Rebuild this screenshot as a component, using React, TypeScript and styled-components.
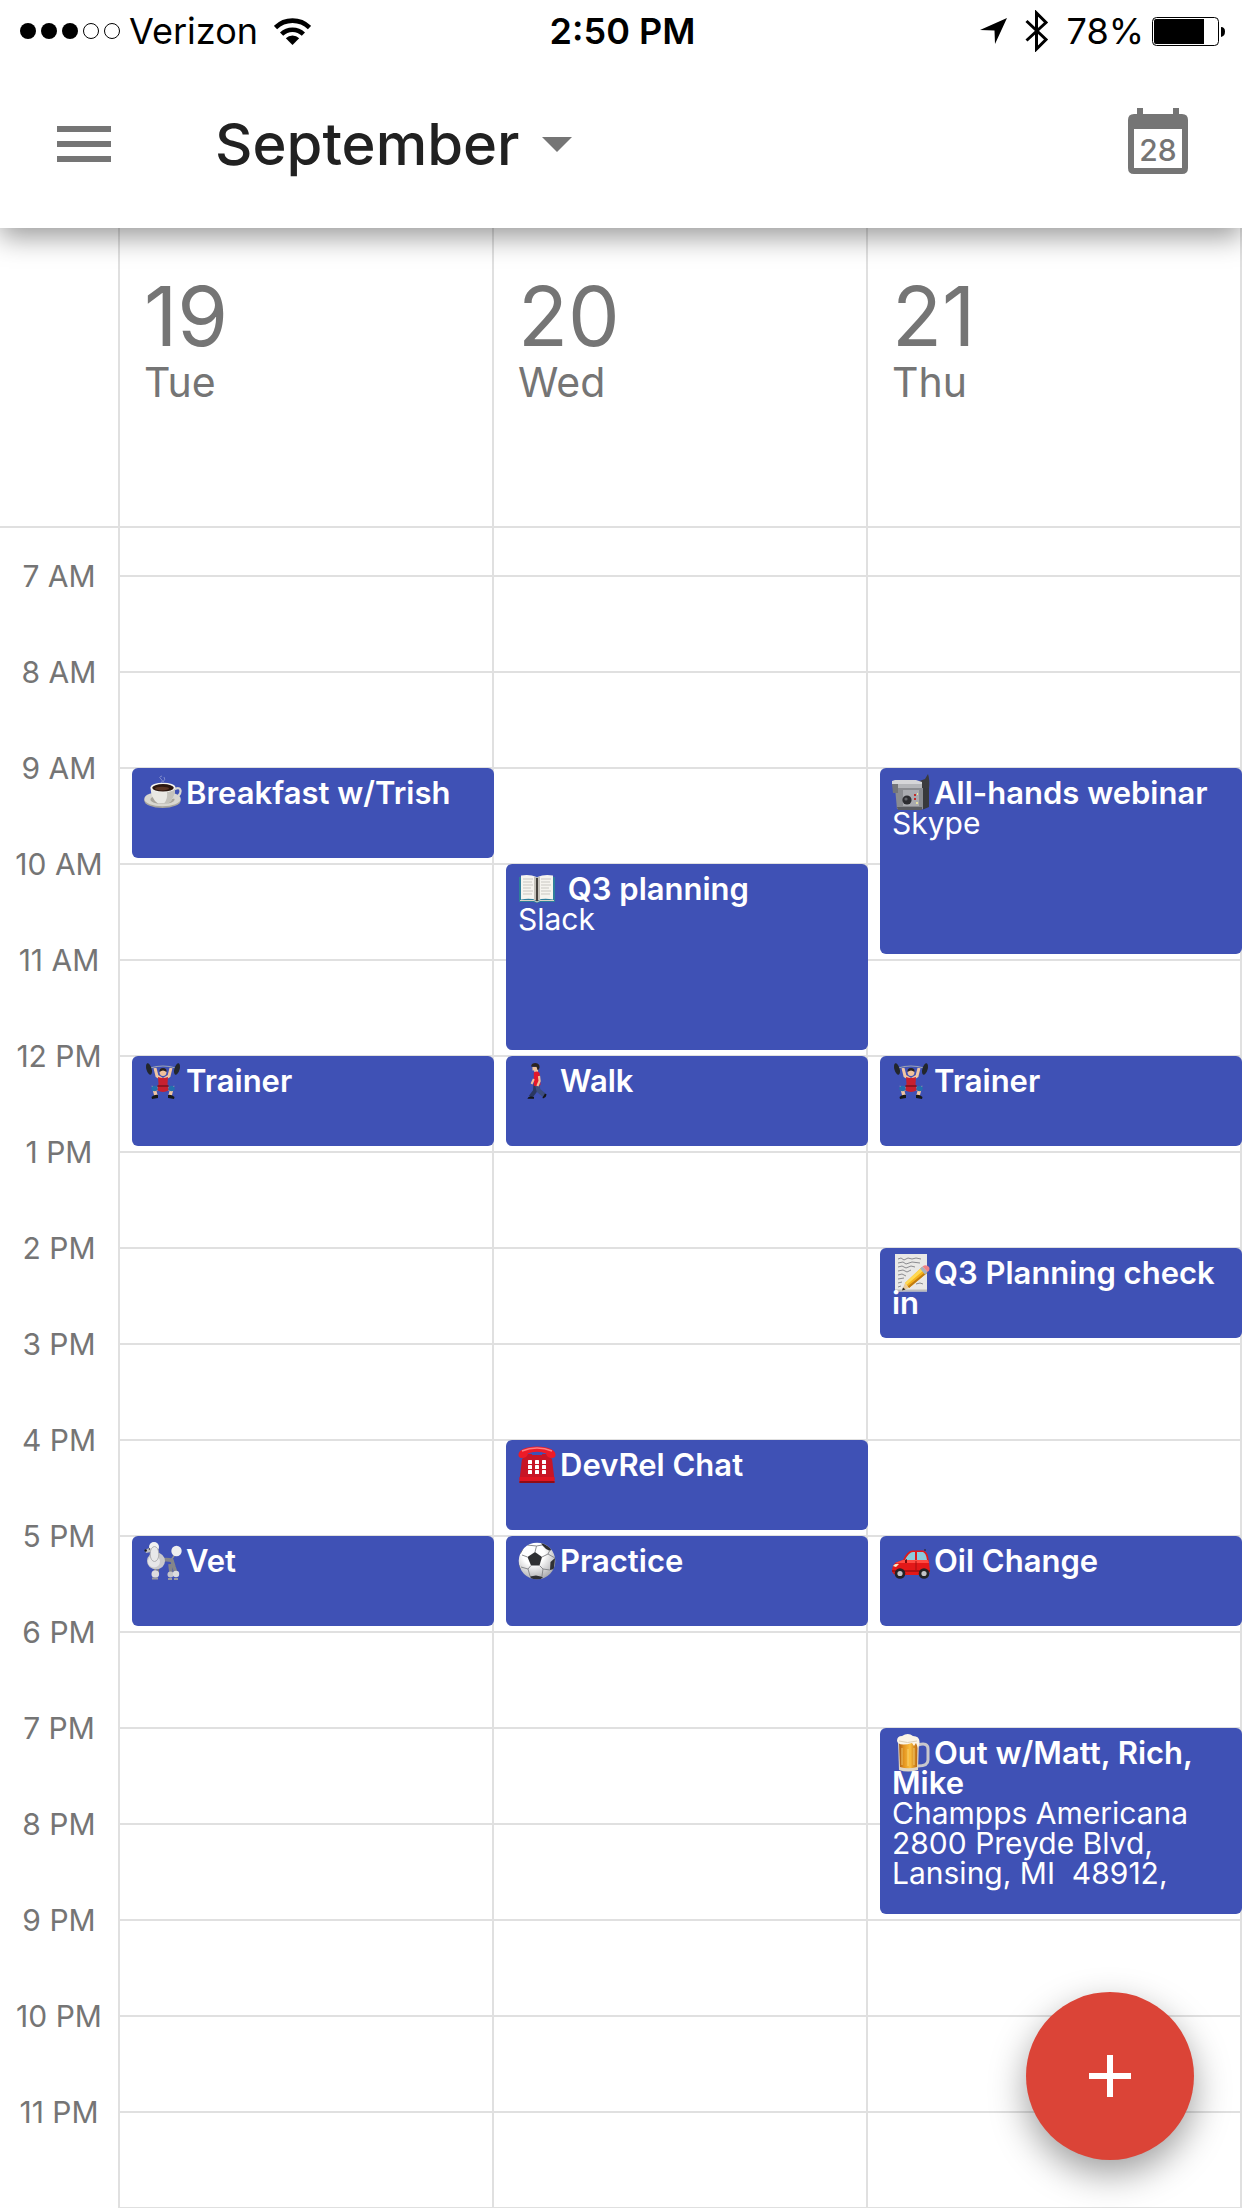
import React from "react";
import styled, { createGlobalStyle } from "styled-components";

const HOUR = 96;
const LINE = "#e0e0e0";
const GREY = "#757575";

const GlobalStyle = createGlobalStyle`
  * { box-sizing: border-box; }
  body {
    margin: 0;
    background: #fff;
    font-family: Inter, "Liberation Sans", sans-serif;
  }
  button {
    padding: 0;
    border: 0;
    background: none;
    font: inherit;
    color: inherit;
    cursor: pointer;
  }
  svg { display: block; flex: none; }
`;

const Screen = styled.div`
  position: relative;
  display: flex;
  flex-direction: column;
  height: 100vh;
  overflow: hidden;
`;

const AppBar = styled.header`
  position: relative;
  z-index: 1;
  background: #fff;
  box-shadow: 0 9px 26px rgba(0, 0, 0, 0.4);
`;

const StatusBar = styled.div`
  display: grid;
  grid-template-columns: 1fr auto 1fr;
  align-items: center;
  height: 60px;
  padding: 2px 17px 0 20px;
  font-size: 36px;
  line-height: 42px;
  color: #000;
`;

const StatusGroup = styled.div<{ $end?: boolean }>`
  display: flex;
  align-items: center;
  justify-content: ${(p) => (p.$end ? "flex-end" : "flex-start")};
  gap: ${(p) => (p.$end ? "18px" : "8px")};
`;

const Carrier = styled.span`
  margin-right: 8px;
`;

const Charge = styled.span`
  display: flex;
  align-items: center;
  gap: 8px;
`;

const Clock = styled.time`
  font-weight: 600;
`;

const Toolbar = styled.div`
  display: flex;
  align-items: center;
  height: 168px;
  padding: 0 54px 0 57px;
`;

const MonthButton = styled.button`
  display: flex;
  align-items: center;
  gap: 22px;
  margin: 0 auto 0 104px;
  font-size: 58px;
  font-weight: 500;
  line-height: 72px;
  color: #212121;
`;

const TodayButton = styled.button`
  padding-bottom: 6px;
`;

const DayHeads = styled.div`
  display: grid;
  grid-template-columns: 120px repeat(3, 1fr);
  flex: none;
  height: 300px;
  border-bottom: 2px solid ${LINE};
  color: ${GREY};
`;

const Corner = styled.div`
  border-right: 2px solid ${LINE};
`;

const DayHead = styled.div`
  display: flex;
  flex-direction: column;
  padding: 46px 24px 0;
  border-right: 2px solid ${LINE};
`;

const DayNumber = styled.span`
  font-size: 82px;
  line-height: 86px;
`;

const DayName = styled.span`
  font-size: 41px;
  line-height: 44px;
`;

const Schedule = styled.main`
  display: grid;
  grid-template-columns: 120px repeat(3, 1fr);
  flex: 1;
  min-height: 0;
  overflow: hidden;
`;

const Gutter = styled.div`
  border-right: 2px solid ${LINE};
`;

const HourLabel = styled.div`
  display: flex;
  align-items: center;
  justify-content: center;
  height: ${HOUR}px;
  font-size: 30px;
  line-height: 32px;
  color: ${GREY};
`;

const DayColumn = styled.div`
  display: grid;
  grid-template-columns: 1fr 2px;
  grid-template-rows: 47px repeat(18, ${HOUR}px);
`;

const ColumnEdge = styled.div`
  grid-area: 1 / 2 / -1 / 3;
  background: ${LINE};
`;

const Slot = styled.div<{ $row: number }>`
  grid-column: 1;
  grid-row: ${(p) => p.$row};
  border-top: 2px solid ${LINE};
`;

const EventCard = styled.button<{ $row: number; $span: number }>`
  z-index: 0;
  grid-column: 1 / 3;
  grid-row: ${(p) => p.$row} / span ${(p) => p.$span};
  display: flex;
  flex-direction: column;
  margin: 1px 0 5px 12px;
  padding: 10px 12px 0;
  border-radius: 6px;
  background: #3f51b5;
  color: #fff;
  text-align: left;
  font-size: 30px;
  line-height: 30px;
  white-space: pre-wrap;
`;

const EventTitle = styled.span`
  font-size: 31px;
  font-weight: 600;
`;

const Emoji = styled.svg`
  display: inline;
  width: 38px;
  height: 38px;
  margin: -8px 4px -8px 0;
  vertical-align: baseline;
`;

const AddButton = styled.button`
  position: absolute;
  z-index: 2;
  right: 48px;
  bottom: 48px;
  display: flex;
  align-items: center;
  justify-content: center;
  width: 168px;
  height: 168px;
  border-radius: 50%;
  background: #db4437;
  box-shadow: 0 14px 36px rgba(0, 0, 0, 0.38);
`;

const SignalIcon = () => (
  <svg width="101" height="18" viewBox="0 0 101 18" role="img" aria-label="Signal 3 of 5">
    {[8, 29, 50].map((x) => (
      <circle key={x} cx={x} cy="9" r="8" />
    ))}
    {[71, 92].map((x) => (
      <circle key={x} cx={x} cy="9" r="7.5" fill="none" stroke="#000" />
    ))}
  </svg>
);

const WifiIcon = () => (
  <svg width="37" height="27" viewBox="0 0 37 27" role="img" aria-label="Wi-Fi">
    <g fill="none" stroke="#000" strokeWidth="4.6">
      <path d="M1.5 9.6 A24.3 24.3 0 0 1 35.5 9.6" />
      <path d="M7.6 16.2 A15.6 15.6 0 0 1 29.4 16.2" />
    </g>
    <path d="M11.8 20.3 A9.5 9.5 0 0 1 25.2 20.3 L18.5 27Z" />
  </svg>
);

const LocationIcon = () => (
  <svg width="27" height="27" viewBox="0 0 27 27" role="img" aria-label="Location">
    <path d="M0 12 L27 0 L15 26 L14.5 12.5Z" />
  </svg>
);

const BluetoothIcon = () => (
  <svg width="24" height="42" viewBox="0 0 24 42" role="img" aria-label="Bluetooth">
    <path
      d="M1.5 30.5 L21 12.5 L11.5 3 V39 L21 29.5 L1.5 11"
      fill="none"
      stroke="#000"
      strokeWidth="3"
    />
  </svg>
);

const BatteryIcon = () => (
  <svg width="73" height="29" viewBox="0 0 73 29" role="img" aria-label="Battery">
    <rect x="0.5" y="0.5" width="66" height="28" rx="4" fill="none" stroke="#000" />
    <path d="M4 2 H52 V27 H4 Q2 27 2 25 V4 Q2 2 4 2Z" />
    <path d="M69 10 Q73 10 73 14.5 T69 20Z" />
  </svg>
);

const MenuIcon = () => (
  <svg width="54" height="36" viewBox="0 0 54 36" fill={GREY}>
    <path d="M0 0H54V6H0Z M0 15H54V21H0Z M0 30H54V36H0Z" />
  </svg>
);

const CaretIcon = () => (
  <svg width="30" height="15" viewBox="0 0 30 15" fill={GREY}>
    <path d="M0 0H30L15 15Z" />
  </svg>
);

const CalendarIcon = () => (
  <svg width="60" height="66" viewBox="0 0 60 66" fill={GREY}>
    <path
      fillRule="evenodd"
      d="M9 0H15V6H45V0H51V6H54Q60 6 60 12V60Q60 66 54 66H6Q0 66 0 60V12Q0 6 6 6H9Z M6 21V60H54V21Z"
    />
    <text x="30" y="53" textAnchor="middle" fontSize="30" fontWeight="500">
      28
    </text>
  </svg>
);

const PlusIcon = () => (
  <svg width="42" height="42" viewBox="0 0 42 42" fill="#fff">
    <path d="M18 0H24V18H42V24H24V42H18V24H0V18H18Z" />
  </svg>
);

const Coffee = () => (
  <>
    <ellipse cx="18.5" cy="26.5" rx="18.2" ry="7.6" fill="#a9a69e" />
    <ellipse cx="18.5" cy="25" rx="18.2" ry="7.3" fill="#d9d7d0" />
    <ellipse cx="18.5" cy="25.5" rx="12" ry="4.6" fill="#a8a49b" />
    <path d="M29 16Q36 12 36.6 17Q36.5 23 28 24" fill="none" stroke="#d6d5d1" strokeWidth="2.2" />
    <path d="M6.5 13.5Q7 25 14 29.5H24Q31 25 31.3 13.5Z" fill="#e9e8e3" />
    <path d="M23 18Q24 25 20 29.5H24Q31 25 31.3 14Z" fill="#c4c2bb" />
    <ellipse cx="19" cy="13.5" rx="12.4" ry="4.8" fill="#f5f4f0" />
    <ellipse cx="19" cy="13.8" rx="10.8" ry="3.7" fill="#2b1710" />
    <ellipse cx="18" cy="14.6" rx="7" ry="1.8" fill="#5a3524" />
    <path d="M17 9Q20 7 17 5Q14 3 18 2M19 8Q22 5 20 3" fill="none" stroke="#9aa3d6" opacity=".7" />
  </>
);

const Book = () => (
  <>
    <path d="M1 7H37V32H23L19 33L15 32H1Z" fill="#2f7f9b" />
    <path d="M3 5.5Q12 4 18.5 7V30Q12 28 3 29.5Z" fill="#f6f4ef" />
    <path d="M35 5.5Q26 4 19.5 7V30Q26 28 35 29.5Z" fill="#f6f4ef" />
    <path d="M16 6.5L19 7.5L22 6.5V30H16Z" fill="#c4c1b9" />
    <path d="M18 8H20V31H18Z" fill="#45423d" />
    <path
      d="M5 9H15M5 12H14M5 15H15M5 18H13M5 21H15M5 24H14M23 9H33M23 12H32M23 15H33M23 18H31M23 21H33M23 24H32"
      stroke="#c9c7c2"
    />
    <path d="M2 30.5H16L19 32L22 30.5H36" stroke="#d9d3c5" fill="none" />
  </>
);

const Walker = () => (
  <>
    <path d="M17.500 22L17 29L12.500 35" fill="none" stroke="#2b3860" strokeWidth="4" strokeLinejoin="round" />
    <path d="M19 22L20.500 28.500L26 33" fill="none" stroke="#3d4e80" strokeWidth="4.2" strokeLinejoin="round" />
    <path d="M9.5 36.6Q10 34.6 13 34.6L16 35V36.8H9.5Z M24.5 35.5L27 31.5L28.6 32.6L27.6 35L25 36.4Z" fill="#151515" />
    <path d="M14.4 5H20V10.5H16.5L16 8.5H14.5Z" fill="#eec19b" />
    <path d="M13.2 4Q13.5 1 17.5 1Q22 1.6 21.5 5.5Q21 8 19.5 8L18.5 4.8H13.5Z" fill="#2b2420" />
    <path d="M15.8 10.5Q19 8.500 21.5 11L22.5 23Q18.500 25 15.8 23.5Z" fill="#e3172b" />
    <path d="M21 14L21.6 19L19.4 24" fill="none" stroke="#efc29d" strokeWidth="2.2" />
    <path d="M15.8 17L13.6 22" stroke="#efc29d" strokeWidth="2" />
  </>
);

const Camera = () => (
  <>
    <path d="M22 9L33 5L36 0Q38 6 37 15L24 16Z" fill="#3b3b3e" />
    <path d="M0 7L30 8V15H2Z" fill="#b4b6ba" />
    <path d="M0 7L3 6H24L30 8V10H0Z" fill="#d5d6d9" />
    <path d="M3 14H32V35H5Z" fill="#8a8c91" />
    <path d="M31 14H37V33L31 35.5Z" fill="#38393c" />
    <path d="M0 10H6V19H1Z" fill="#737579" />
    <path d="M11 16H27V32H11Z" fill="#a9abb0" />
    <circle cx="15" cy="26" r="4.6" fill="#2c2d31" />
    <circle cx="14" cy="25" r="1.6" fill="#606267" />
    <path d="M22 20H24V22H22Z M22 24H24V26H22Z" fill="#c22b2b" />
    <path d="M24 28H26V30H24Z M25 19H26V21H25Z" fill="#e9e3a2" />
    <path d="M5 33H30V36H6Z" fill="#5a5c61" />
  </>
);

const Lifter = () => (
  <>
    <path d="M6 6Q19 2 32 6" fill="none" stroke="#9ba3b5" strokeWidth="1.2" />
    <ellipse cx="5" cy="7" rx="2.6" ry="6" transform="rotate(-16 5 7)" fill="#22262c" />
    <ellipse cx="33" cy="7" rx="2.6" ry="6" transform="rotate(16 33 7)" fill="#22262c" />
    <path d="M11 6L13 14L18 17M27 6L25 14L20 17" fill="none" stroke="#f2c6a2" strokeWidth="3" />
    <path d="M14 27L10 26L12 34M24 27L28 26L26 34" fill="none" stroke="#f2c6a2" strokeWidth="3.4" />
    <circle cx="19" cy="10.5" r="3.4" fill="#f0c29b" />
    <path d="M15.5 10Q15 6 19 6Q23 6 22.5 10Q19 7 15.5 10Z" fill="#2b211c" />
    <path d="M14 15Q19 17 24 15L23.5 22L25 28Q19 32 13 28L14.5 22Z" fill="#c8202f" />
    <path d="M13.5 23H24.5V25H13.5Z" fill="#8b1521" />
    <ellipse cx="10.5" cy="26.5" rx="3.2" ry="2.8" fill="#236fae" />
    <ellipse cx="27.5" cy="26.5" rx="3.2" ry="2.8" fill="#236fae" />
    <path d="M7.5 35Q11 32 14 33V36L8 37Z M30.5 35Q27 32 24 33V36L30 37Z" fill="#181818" />
  </>
);

const Memo = () => (
  <>
    <path d="M3 0H35V37.5H3Z" fill="#e9e8e6" />
    <path d="M3 35.5H35V37.5H3Z" fill="#bdbcba" />
    <path
      d="M6 5L9 4L12 6L16 4L20 5L24 4L29 5M6 9L11 8L14 10L20 8L28 9M6 13L10 12L14 14L19 12L23 13M6 17L11 16L15 18L19 16M6 21L10 20L14 22M6 25L12 24M6 29L10 28M6 33L9 32M24 30L28 29L31 30"
      fill="none"
      stroke="#8b8b8f"
    />
    <path d="M13 29L17 34L35 19L30 13Z" fill="#f5b21a" />
    <path d="M13 29L14.5 31L32 16L30 13Z" fill="#ffd953" />
    <path d="M15.5 32.5L17 34L35 19L34 17.5Z" fill="#c07a10" />
    <path d="M13 29L17 34L10 36.5Z" fill="#eccb99" />
    <path d="M11 33.5L13.5 35.5L10 36.5Z" fill="#29251f" />
    <path d="M28 14.5L30.5 12.5L35.5 18L33 20.5Z" fill="#a9b3bd" />
    <path d="M30.5 12.5Q34 10 37 13Q38.5 16 35.5 18Z" fill="#ef8186" />
  </>
);

const Phone = () => (
  <>
    <path d="M4 13L10 8H28L34 13L36.5 34H1.5Z" fill="#c81525" />
    <path d="M1.5 31H36.5V37H1.5Z" fill="#e01522" />
    <path d="M1.5 35H36.5V37H1.5Z" fill="#8f0c16" />
    <path d="M.5 8Q2 1 19 .5Q36 1 37.5 8Q38 12 34 12Q29 12 28 7.5Q19 4 10 7.5Q9 12 4 12Q0 12 .5 8Z" fill="#ed1b27" />
    <path d="M4 5Q11 2 19 2T34 5" fill="none" stroke="#ff7e80" strokeWidth="1.4" />
    <path d="M14 6.5H24V9H14Z" fill="#3f51b5" />
    <g fill="#fff">
      {[14, 19, 24].map((y) =>
        [10, 17, 24].map((x) => <rect key={`${x}-${y}`} x={x} y={y} width="4" height="4" rx=".6" />)
      )}
    </g>
  </>
);

const Ball = () => (
  <>
    <defs>
      <radialGradient id="ball" cx=".4" cy=".3" r=".75">
        <stop offset=".4" stopColor="#fff" />
        <stop offset="1" stopColor="#a5a5a8" />
      </radialGradient>
      <clipPath id="ball-clip">
        <circle cx="19" cy="19" r="18.3" />
      </clipPath>
    </defs>
    <circle cx="19" cy="19" r="18.3" fill="url(#ball)" />
    <g clipPath="url(#ball-clip)" fill="#2f3033">
      <path d="M9.5 15L17 10L24 15L21.5 23.5H13Z" />
      <path d="M23 0L34 6L32 9Q27 7 24 3Z" />
      <path d="M8 2L3 11L0 14V5Z" />
      <path d="M37 16L32.500 20L32 28L36 27Z" />
      <path d="M0 19L1.500 24L3 28L0 28Z" />
      <path d="M12 34.5L18 33.5L25 35L22 38H14Z" />
      <path
        d="M17 10L18.5 4L24 3M18.5 4L9 3M9.5 15L4 13M24 15L30 12L32 8M30 12L37 16M21.5 23.5L25 27L32 28M25 27L24 34M13 23.5L10 27L3 25M10 27L12 34"
        fill="none"
        stroke="#8a8b8e"
      />
    </g>
  </>
);

const Poodle = () => (
  <>
    <path d="M27 18Q30 15 31 11" fill="none" stroke="#8e8e92" strokeWidth="1.5" />
    <path d="M17 18Q24 17 28 18.5L30 25L32 31M26 22L27 31" fill="none" stroke="#858589" strokeWidth="3.6" />
    <path d="M11 25V32M14 25V31" stroke="#77777b" strokeWidth="2" />
    <path d="M1 8L7 5V10L2 11Z" fill="#bdbdc0" />
    <circle cx="1.7" cy="8.5" r="1.2" fill="#1c1c1e" />
    <circle cx="10" cy="5" r="5" fill="#f1f1f2" />
    <ellipse cx="12" cy="19" rx="9" ry="8.5" fill="#c9c9cc" />
    <circle cx="10" cy="19.5" r="6" fill="#e6e6e8" />
    <ellipse cx="10.500" cy="12" rx="4.4" ry="7.5" fill="#e8e8ea" stroke="#a2a2a6" strokeWidth=".8" />
    <circle cx="32.5" cy="9" r="5.2" fill="#eeeeef" />
    <circle cx="5.5" cy="7" r=".8" fill="#222" />
    <circle cx="11.3" cy="32" r="3.8" fill="#dcdcde" />
    <circle cx="26.500" cy="32.5" r="3" fill="#c6c6ca" />
    <circle cx="32" cy="32" r="3.2" fill="#dcdcde" />
    <path d="M8 36.5H14M24 37H28M30 37H34" stroke="#9c9ca0" strokeWidth="1.8" />
  </>
);

const Car = () => (
  <>
    <path d="M1 24Q2 20 11 18Q15 9 20 8.5H31Q36 9 37 20L38 29Q37 33 34 33H4Q0 32 0 28Z" fill="#e31818" />
    <path d="M13 18Q17 10 21 10H23V18Z M25 10H31Q34 11 35 18H25Z" fill="#8ccbdc" />
    <path d="M11 18H36L37 21H3Z" fill="#ff4a41" />
    <path d="M13 18L15 17V21H13Z" fill="#7c0b0d" />
    <path d="M1 24Q3 21 7 22L4 25Z" fill="#f6e8c8" />
    <path d="M24 19V30" stroke="#a30e10" />
    <path d="M0 28H38V30H0Z" fill="#ad1113" />
    <path d="M33 9V7" stroke="#222" />
    <circle cx="8" cy="31.5" r="5.3" fill="#232326" />
    <circle cx="32" cy="31.5" r="5.3" fill="#232326" />
    <circle cx="8" cy="31.5" r="2.6" fill="#c3c4c8" />
    <circle cx="32" cy="31.5" r="2.6" fill="#c3c4c8" />
  </>
);

const Beer = () => (
  <>
    <defs>
      <linearGradient id="beer" x1="0" x2="1">
        <stop offset="0" stopColor="#a85a10" />
        <stop offset=".25" stopColor="#e2921e" />
        <stop offset=".6" stopColor="#fbbf3f" />
        <stop offset="1" stopColor="#b9660f" />
      </linearGradient>
    </defs>
    <path d="M26 11Q36 8 36 15V26Q36 32 26 32" fill="none" stroke="#c8c7cc" strokeWidth="3" />
    <path d="M6 7H27L26 36Q16 39 7 36Z" fill="#e0d6c4" />
    <path d="M7 8H25.5L25 33Q16 35.5 8 33Z" fill="url(#beer)" />
    <path d="M10 14V31M16 15V32M22 14V31" stroke="#ffe38b" opacity=".45" strokeWidth="1.5" />
    <path d="M5 7Q5 2 10 2Q16 -2 21 2Q28 2 27.5 9L26 14L24 9L22 12L20 9Q10 12 6 9Z" fill="#fbf4e6" />
    <path d="M7 7Q15 10 25 7" stroke="#ddcfb5" fill="none" />
  </>
);

interface CalendarEvent {
  emoji: string;
  art: React.FC;
  title: string;
  place?: string;
  start: number;
  hours: number;
}

interface Day {
  date: number;
  name: string;
  events: CalendarEvent[];
}

const FIRST_HOUR = 7;

const days: Day[] = [
  {
    date: 19,
    name: "Tue",
    events: [
      { emoji: "Coffee", art: Coffee, title: "Breakfast w/Trish", start: 9, hours: 1 },
      { emoji: "Weight lifter", art: Lifter, title: "Trainer", start: 12, hours: 1 },
      { emoji: "Poodle", art: Poodle, title: "Vet", start: 17, hours: 1 },
    ],
  },
  {
    date: 20,
    name: "Wed",
    events: [
      { emoji: "Open book", art: Book, title: " Q3 planning", place: "Slack", start: 10, hours: 2 },
      { emoji: "Walking", art: Walker, title: "Walk", start: 12, hours: 1 },
      { emoji: "Telephone", art: Phone, title: "DevRel Chat", start: 16, hours: 1 },
      { emoji: "Soccer ball", art: Ball, title: "Practice", start: 17, hours: 1 },
    ],
  },
  {
    date: 21,
    name: "Thu",
    events: [
      { emoji: "Video camera", art: Camera, title: "All-hands webinar", place: "Skype", start: 9, hours: 2 },
      { emoji: "Weight lifter", art: Lifter, title: "Trainer", start: 12, hours: 1 },
      { emoji: "Memo", art: Memo, title: "Q3 Planning check\nin", start: 14, hours: 1 },
      { emoji: "Car", art: Car, title: "Oil Change", start: 17, hours: 1 },
      {
        emoji: "Beer mug",
        art: Beer,
        title: "Out w/Matt, Rich,\nMike",
        place: "Champps Americana\n2800 Preyde Blvd,\nLansing, MI  48912,",
        start: 19,
        hours: 2,
      },
    ],
  },
];

const hours = Array.from({ length: 17 }, (_, i) => FIRST_HOUR + i);
const slots = Array.from({ length: 18 }, (_, i) => i + 2);

const formatHour = (h: number) => `${h > 12 ? h - 12 : h} ${h < 12 ? "AM" : "PM"}`;

export default function App() {
  return (
    <Screen>
      <GlobalStyle />
      <AppBar>
        <StatusBar>
          <StatusGroup>
            <SignalIcon />
            <Carrier>Verizon</Carrier>
            <WifiIcon />
          </StatusGroup>
          <Clock>2:50 PM</Clock>
          <StatusGroup $end>
            <LocationIcon />
            <BluetoothIcon />
            <Charge>
              78%
              <BatteryIcon />
            </Charge>
          </StatusGroup>
        </StatusBar>
        <Toolbar>
          <button aria-label="Menu">
            <MenuIcon />
          </button>
          <MonthButton>
            September
            <CaretIcon />
          </MonthButton>
          <TodayButton aria-label="Go to today">
            <CalendarIcon />
          </TodayButton>
        </Toolbar>
      </AppBar>

      <DayHeads>
        <Corner />
        {days.map((day) => (
          <DayHead key={day.date}>
            <DayNumber>{day.date}</DayNumber>
            <DayName>{day.name}</DayName>
          </DayHead>
        ))}
      </DayHeads>

      <Schedule>
        <Gutter>
          {hours.map((h) => (
            <HourLabel key={h}>{formatHour(h)}</HourLabel>
          ))}
        </Gutter>
        {days.map((day) => (
          <DayColumn key={day.date}>
            <ColumnEdge />
            {slots.map((row) => (
              <Slot key={row} $row={row} />
            ))}
            {day.events.map((event) => {
              const Art = event.art;
              return (
                <EventCard key={event.start} $row={event.start - FIRST_HOUR + 2} $span={event.hours}>
                  <EventTitle>
                    <Emoji viewBox="0 0 38 38" role="img" aria-label={event.emoji}>
                      <Art />
                    </Emoji>
                    {event.title}
                  </EventTitle>
                  {event.place && <span>{event.place}</span>}
                </EventCard>
              );
            })}
          </DayColumn>
        ))}
      </Schedule>

      <AddButton aria-label="Create event">
        <PlusIcon />
      </AddButton>
    </Screen>
  );
}
